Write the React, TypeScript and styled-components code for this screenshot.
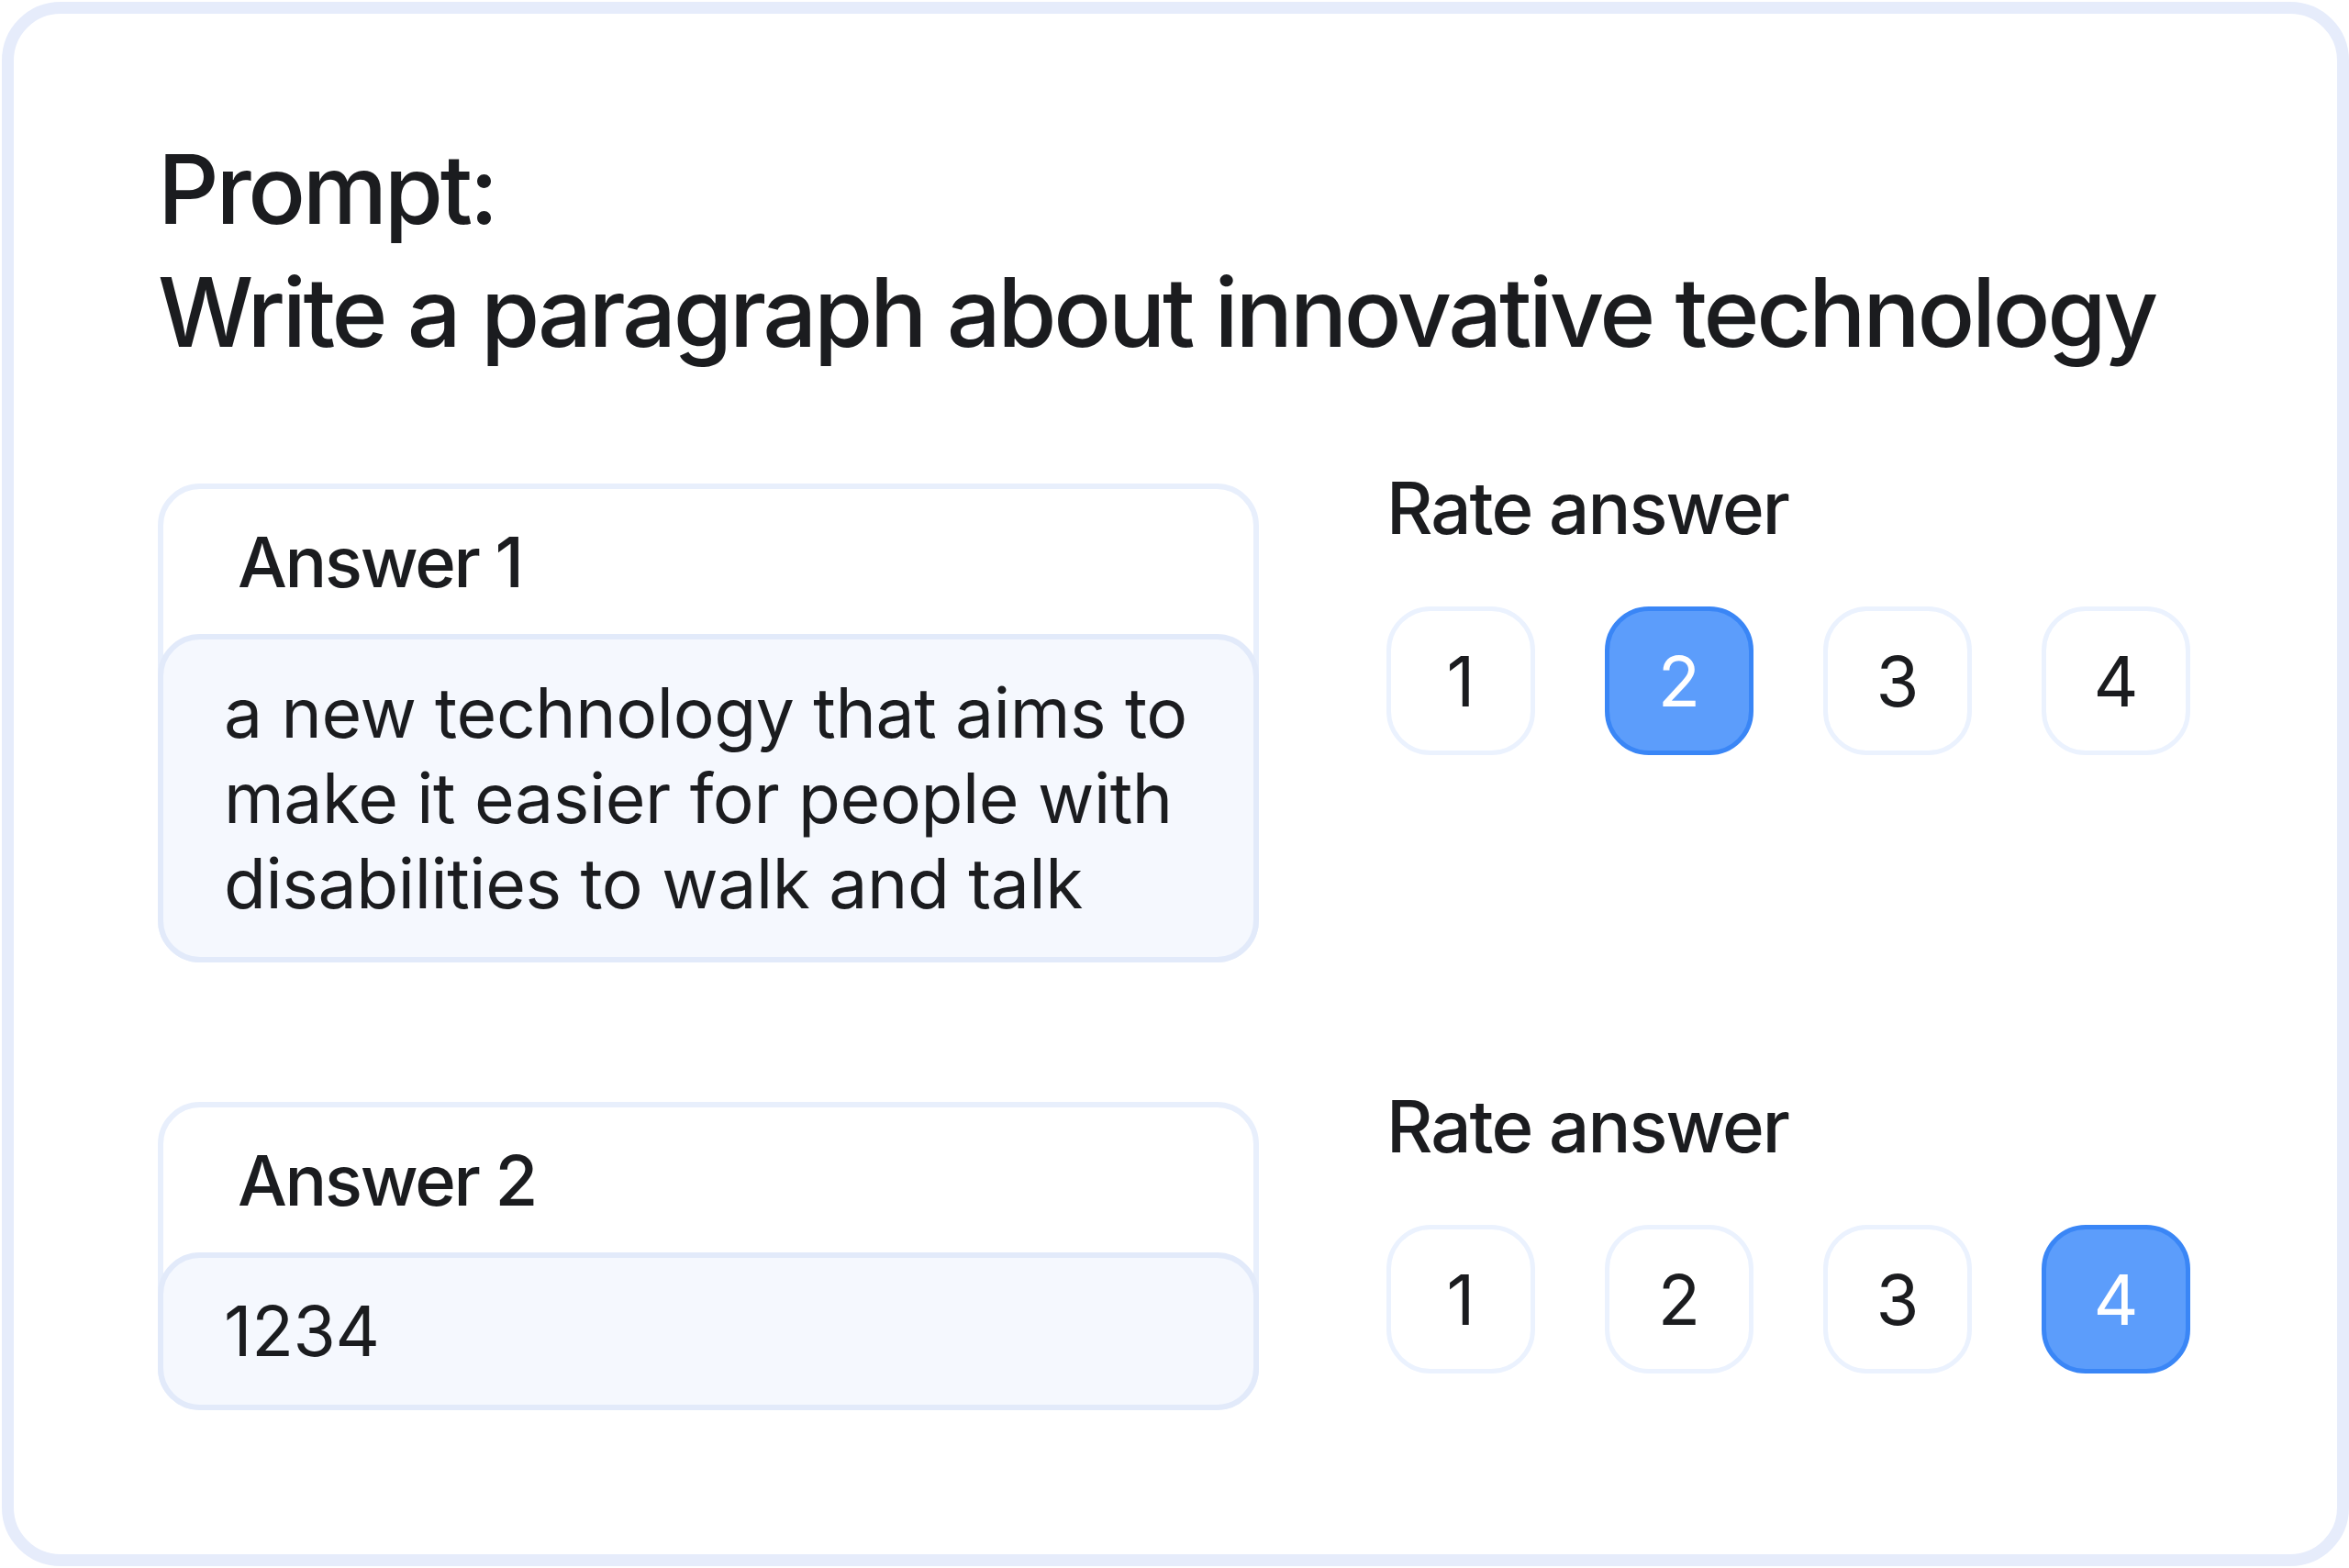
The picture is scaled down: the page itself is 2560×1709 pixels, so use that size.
import React from 'react';
import styled, { createGlobalStyle } from 'styled-components';

const GlobalStyle = createGlobalStyle`
  html, body {
    margin: 0;
    padding: 0;
    background: #ffffff;
  }
  body {
    font-family: Inter, "Noto Sans", "Liberation Sans", sans-serif;
    color: #1b1c1f;
  }
`;

const Frame = styled.div`
  box-sizing: border-box;
  width: 2560px;
  height: 1709px;
  padding: 2px 0 0 2px;
`;

const Card = styled.div`
  box-sizing: border-box;
  width: 2558px;
  height: 1705px;
  border: 13px solid #e6ecfb;
  border-radius: 64px;
  background: #ffffff;
  padding: 124px 0 0 157px;
  display: flex;
  flex-direction: column;
`;

const Prompt = styled.h1`
  margin: 0;
  font-size: 104px;
  line-height: 134px;
  font-weight: 500;
  letter-spacing: -0.032em;
`;

const Sections = styled.div`
  margin-top: 120px;
  display: flex;
  flex-direction: column;
  gap: 152px;
`;

const Row = styled.div`
  display: flex;
  gap: 139px;
  align-items: flex-start;
`;

const Answer = styled.div`
  box-sizing: border-box;
  width: 1200px;
  border: 6px solid #e8effc;
  border-radius: 46px;
  display: flex;
  flex-direction: column;
`;

const AnswerTitle = styled.div`
  height: 158px;
  box-sizing: border-box;
  padding: 0 0 0 81px;
  display: flex;
  align-items: center;
  font-size: 76px;
  font-weight: 500;
  letter-spacing: -0.03em;
`;

const AnswerBody = styled.div`
  margin: 0 -6px -6px;
  border: 6px solid #e2eafa;
  border-radius: 46px;
  background: #f5f8fe;
  padding: 33px 40px 34px 66px;
  font-size: 75px;
  line-height: 93px;
  letter-spacing: -0.005em;
`;

const Rating = styled.div`
  display: flex;
  flex-direction: column;
  margin-top: -20px;
`;

const RateLabel = styled.div`
  font-size: 78px;
  line-height: 94px;
  font-weight: 500;
  letter-spacing: -0.025em;
`;

const Options = styled.div`
  margin-top: 60px;
  display: flex;
  gap: 76px;
`;

const Option = styled.button<{ $active?: boolean }>`
  box-sizing: border-box;
  width: 162px;
  height: 162px;
  border-radius: 48px;
  border: 5px solid ${(p) => (p.$active ? '#3a86f6' : '#ebf2fe')};
  background: ${(p) => (p.$active ? '#5c9dfb' : '#ffffff')};
  color: ${(p) => (p.$active ? '#ffffff' : '#1b1c1f')};
  font-family: Inter, "Noto Sans", "Liberation Sans", sans-serif;
  font-size: 76px;
  font-weight: 400;
  padding: 0;
  display: flex;
  align-items: center;
  justify-content: center;
  cursor: pointer;
`;

const answers = [
  {
    title: 'Answer 1',
    text: 'a new technology that aims to make it easier for people with disabilities to walk and talk',
    rating: 2,
  },
  { title: 'Answer 2', text: '1234', rating: 4 },
];

const App = () => {
  return (
    <>
      <GlobalStyle />
      <Frame>
        <Card>
          <Prompt>
            Prompt:
            <br />
            Write a paragraph about innovative technology
          </Prompt>
          <Sections>
            {answers.map((a) => (
              <Row key={a.title}>
                <Answer>
                  <AnswerTitle>{a.title}</AnswerTitle>
                  <AnswerBody>{a.text}</AnswerBody>
                </Answer>
                <Rating>
                  <RateLabel>Rate answer</RateLabel>
                  <Options>
                    {[1, 2, 3, 4].map((n) => (
                      <Option key={n} $active={n === a.rating}>
                        {n}
                      </Option>
                    ))}
                  </Options>
                </Rating>
              </Row>
            ))}
          </Sections>
        </Card>
      </Frame>
    </>
  );
};

export default App;
